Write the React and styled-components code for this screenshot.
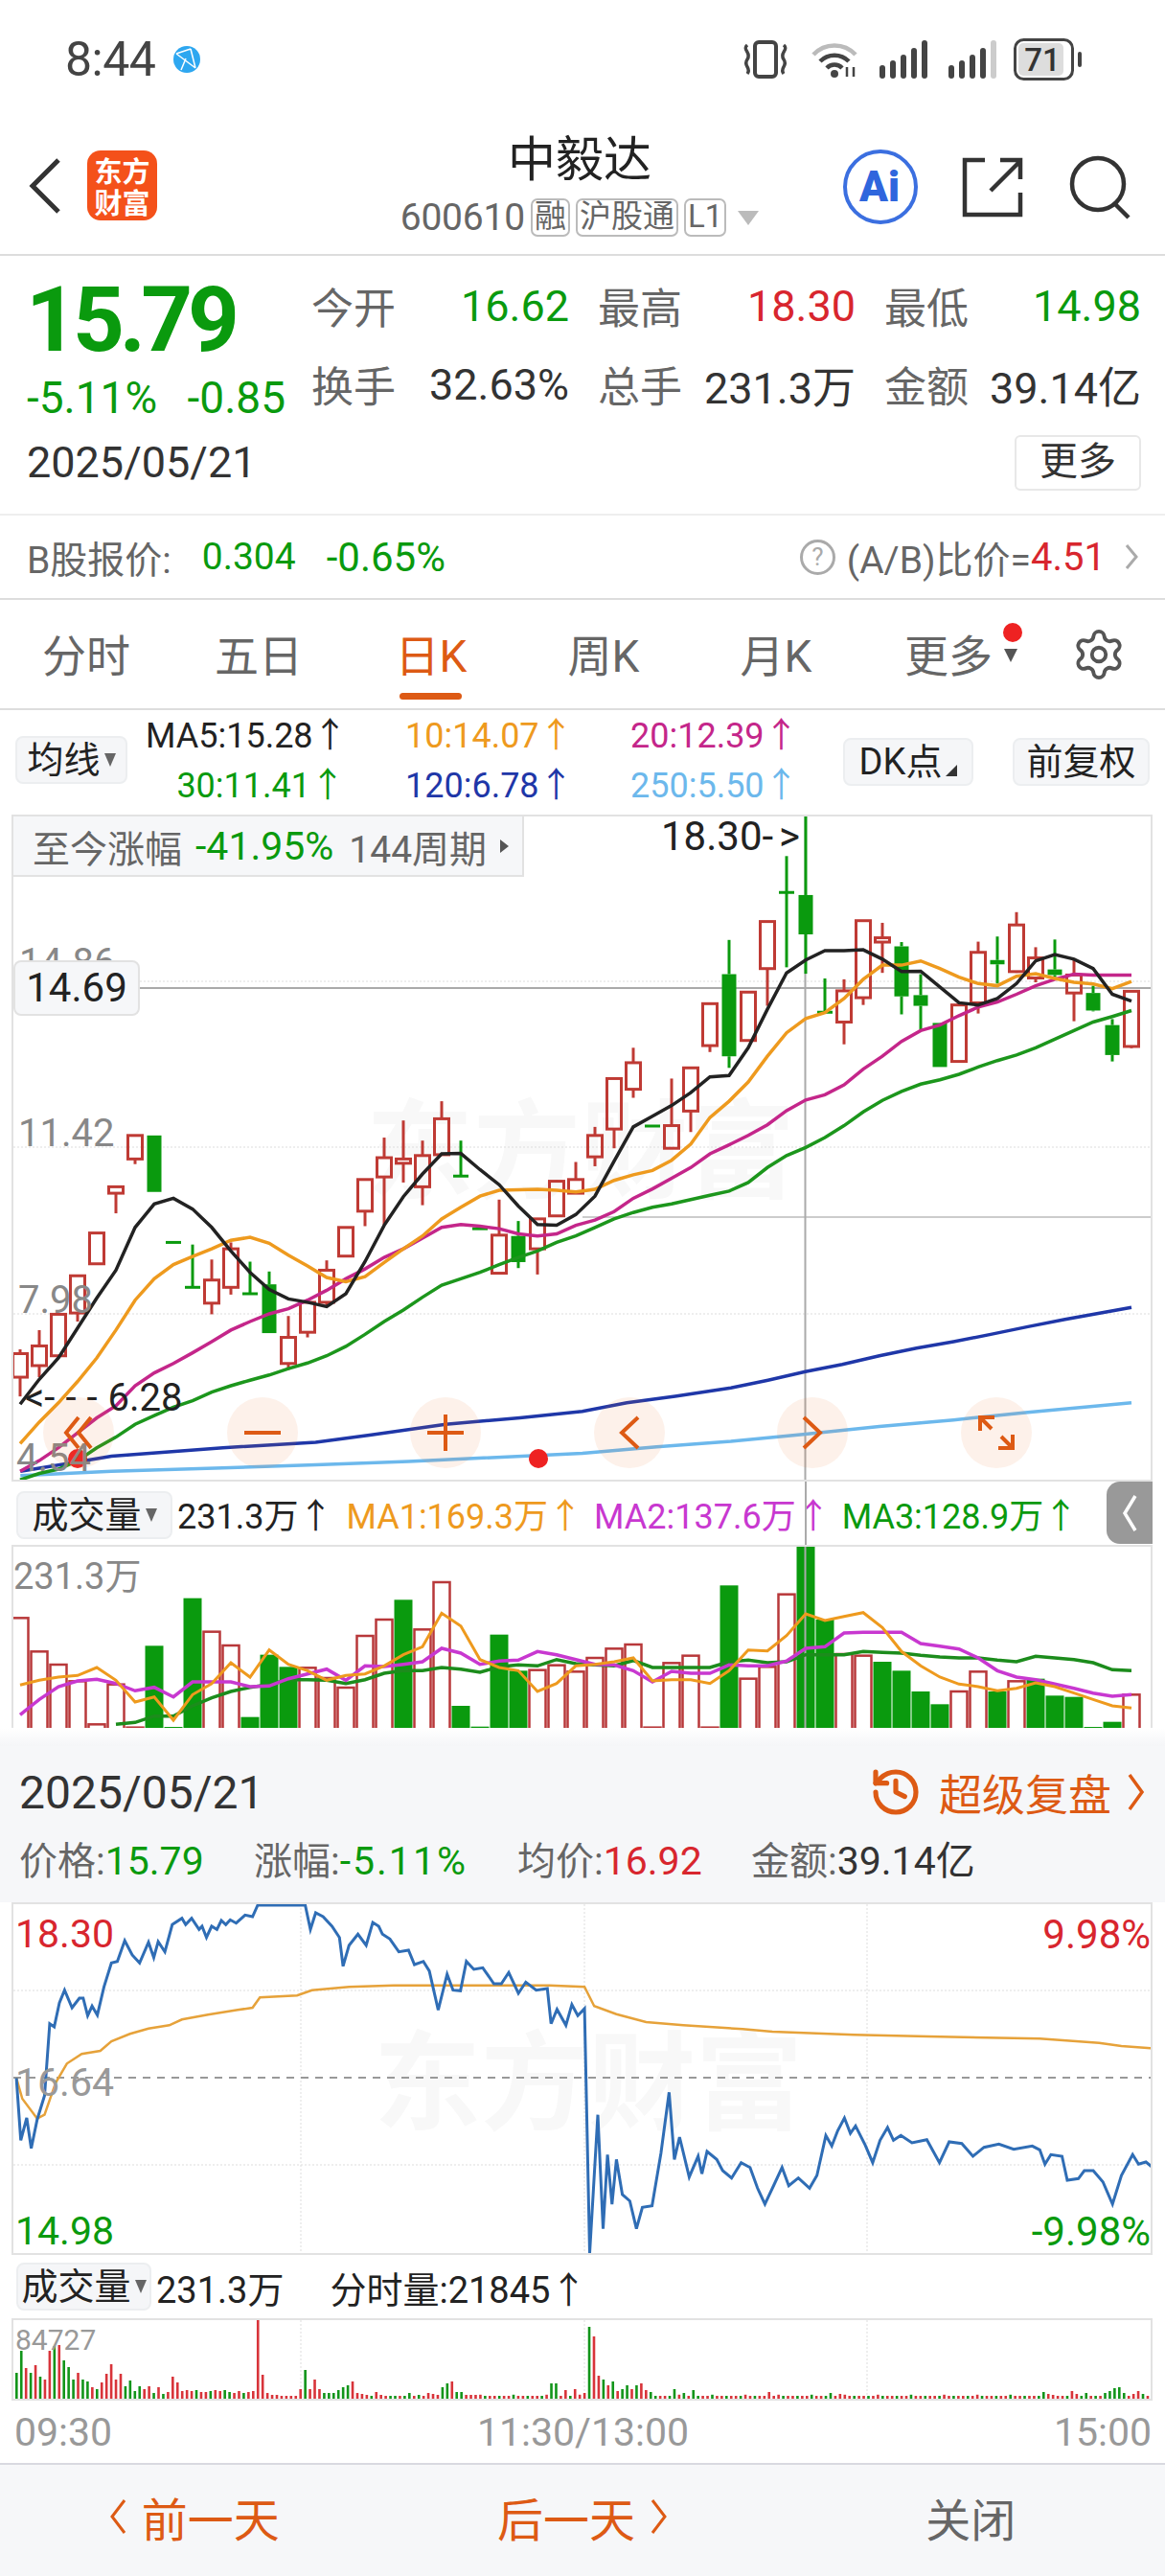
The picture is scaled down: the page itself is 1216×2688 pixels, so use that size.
import styled, { createGlobalStyle } from "styled-components";
import { Settings, History } from "lucide-react";

const GlobalStyle = createGlobalStyle`
    html, body { margin:0; padding:0; background:#fff; }
    body { font-family: Roboto, "Noto Sans CJK SC", sans-serif; color:#333; }
`;

const GREEN = "#0a9a0e";
const RED = "#d8262e";
const ORANGE = "#dd5a14";
const GRAY = "#666";

const Page = styled.div`
    width:1216px;
    height:2688px;
    overflow:hidden;
    background:#fff;
    display:flex;
    flex-direction:column;
`;

/* status bar */
const StatusBar = styled.div`
    height:120px;
    flex:none;
    display:flex;
    align-items:center;
    justify-content:space-between;
    padding:4px 86px 0 68px;
    box-sizing:border-box;
`;
const StatusTime = styled.div`
    display:flex;
    align-items:center;
    gap:19px;
    font-size:50px;
    letter-spacing:-0.5px;
    color:#444;
`;
const StatusIcons = styled.div`
    display:flex;
    align-items:center;
    gap:22px;
`;

/* nav */
const Nav = styled.div`
    height:147px;
    flex:none;
    display:grid;
    grid-template-columns:1fr auto 1fr;
    align-items:start;
    box-sizing:border-box;
    border-bottom:2px solid #ddd;
`;
const NavLeft = styled.div`
    display:flex;
    align-items:center;
    gap:27px;
    padding:37px 0 0 30px;
`;
const Logo = styled.div`
    width:73px;
    height:73px;
    border-radius:14px;
    background:#f4511a;
    color:#fff;
    font-size:29px;
    font-weight:700;
    line-height:33px;
    text-align:center;
    display:flex;
    align-items:center;
    justify-content:center;
    font-family:"Noto Sans CJK SC", sans-serif;
`;
const NavCenter = styled.div`
    display:flex;
    flex-direction:column;
    align-items:center;
    padding:17px 6px 0 0;
`;
const Title = styled.div`
    font-size:50px;
    line-height:60px;
    color:#222;
`;
const SubRow = styled.div`
    display:flex;
    align-items:center;
    gap:6px;
    margin-top:10px;
    font-size:39px;
    line-height:40px;
    color:#666;
    letter-spacing:-0.2px;
`;
const MiniTag = styled.span`
    border:2px solid #bbb;
    border-radius:7px;
    font-size:33px;
    line-height:34px;
    height:36px;
    padding:0 2px;
    letter-spacing:0;
    color:#666;
    display:inline-block;
`;
const Tri = styled.span`
    width:0;
    height:0;
    border-left:11px solid transparent;
    border-right:11px solid transparent;
    border-top:15px solid #bbb;
    margin-left:6px;
`;
const NavRight = styled.div`
    display:flex;
    justify-content:flex-end;
    align-items:center;
    gap:40px;
    padding:35px 34px 0 0;
`;

/* quote */
const Quote = styled.div`
    height:271px;
    flex:none;
    box-sizing:border-box;
    border-bottom:2px solid #eee;
    padding:17px 27px 0 28px;
    display:grid;
    grid-template-columns:297px 1fr;
    grid-template-rows:164px auto;
`;
const PriceBig = styled.div`
    font-size:94px;
    line-height:88px;
    font-weight:700;
    color:${GREEN};
    letter-spacing:-5px;
    margin:6px 0 0 -1px;
`;
const ChangeRow = styled.div`
    display:flex;
    justify-content:space-between;
    margin-top:12px;
    font-size:46px;
    line-height:50px;
    color:${GREEN};
    width:270px;
`;
const Pairs = styled.div`
    display:grid;
    grid-template-columns:269px 269px 268px;
    grid-template-rows:82px 82px;
    column-gap:30px;
    justify-content:end;
`;
const Pair = styled.div`
    display:flex;
    justify-content:space-between;
    align-items:center;
    height:70px;
    font-size:44px;
    color:${GRAY};
`;
const PairValue = styled.span`
    font-size:45px;
    color:${p => p.$color || "#333"};
`;
const DateText = styled.div`
    font-size:45px;
    line-height:54px;
    color:#333;
    align-self:start;
    margin-top:8px;
`;
const MoreBtn = styled.div`
    justify-self:end;
    align-self:start;
    width:132px;
    height:58px;
    box-sizing:border-box;
    border:2px solid #e8e8e8;
    border-radius:6px;
    font-size:40px;
    line-height:52px;
    text-align:center;
    color:#333;
    margin:6px 0 0 auto;
`;
const Blank = styled.div`
    display:flex;
`;

/* B row */
const BRow = styled.div`
    height:88px;
    flex:none;
    box-sizing:border-box;
    border-bottom:2px solid #ddd;
    padding:0 28px;
    display:flex;
    align-items:center;
    font-size:39px;
    color:${GRAY};
`;
const BVal = styled.span`
    color:${p => p.$color};
    margin-left:${p => p.$ml || 0}px;
    font-size:${p => p.$fs || 39}px;
`;
const BRight = styled.div`
    margin-left:auto;
    display:flex;
    align-items:center;
`;
const HelpCircle = styled.span`
    width:37px;
    height:37px;
    box-sizing:border-box;
    border:3px solid #aaa;
    border-radius:50%;
    color:#aaa;
    font-size:26px;
    line-height:31px;
    text-align:center;
    margin-right:12px;
`;

/* tabs */
const Tabs = styled.div`
    height:115px;
    flex:none;
    box-sizing:border-box;
    border-bottom:2px solid #ddd;
    display:grid;
    grid-template-columns:repeat(6,180px) 1fr;
    align-items:center;
`;
const Tab = styled.div`
    position:relative;
    height:100%;
    display:flex;
    align-items:center;
    justify-content:center;
    font-size:46px;
    padding-bottom:4px;
    box-sizing:border-box;
    color:${p => p.$active ? ORANGE : GRAY};
    &::after{
        content:"";
        display:${p => p.$active ? "block" : "none"};
        position:absolute;
        left:57px;
        bottom:9px;
        width:65px;
        height:7px;
        border-radius:4px;
        background:${ORANGE};
    }
`;
const RedDot = styled.span`
    position:absolute;
    left:${p => p.$left}px;
    top:${p => p.$top}px;
    width:20px;
    height:20px;
    border-radius:50%;
    background:#ee2222;
`;
const TabTri = styled.span`
    position:absolute;
    left:148px;
    top:51px;
    border-left:7px solid transparent;
    border-right:7px solid transparent;
    border-top:14px solid #555;
`;
const GearWrap = styled.div`
    display:flex;
    justify-content:center;
    padding-right:2px;
    color:#555;
`;

/* MA row */
const MaRow = styled.div`
    height:109px;
    flex:none;
    display:flex;
    padding:10px 16px 0 16px;
    box-sizing:border-box;
    align-items:flex-start;
`;
const PickBtn = styled.div`
    height:${p => p.$h || 50}px;
    width:${p => p.$w}px;
    margin-top:${p => p.$mt || 0}px;
    margin-left:${p => p.$ml || 0}px;
    box-sizing:border-box;
    background:#f5f6f8;
    border:2px solid #eceef0;
    border-radius:8px;
    font-size:${p => p.$fs || 38}px;
    line-height:${p => (p.$h || 50) - 6}px;
    color:#222;
    display:flex;
    align-items:center;
    justify-content:center;
    gap:4px;
    flex:none;
`;
const SmallTri = styled.span`
    border-left:6px solid transparent;
    border-right:6px solid transparent;
    border-top:14px solid #666;
`;
const CornerTri = styled.span`
    border-left:12px solid transparent;
    border-bottom:12px solid #333;
    align-self:flex-end;
    margin-bottom:8px;
`;
const MaGrid = styled.div`
    display:grid;
    grid-template-columns:208px 235px 235px;
    margin:-9px 0 0 19px;
    flex:none;
    & > :nth-child(3n+2){ margin-left:63px; }
    & > :nth-child(3n+3){ margin-left:63px; }
`;
const MaItem = styled.div`
    font-size:36px;
    line-height:52px;
    white-space:nowrap;
    text-align:${p => p.$right ? "right" : "left"};
    color:${p => p.$color};
`;

/* chart frames */
const Frame = styled.div`
    position:relative;
    flex:none;
    width:1191px;
    height:${p => p.$h}px;
    margin-left:12px;
    box-sizing:border-box;
    border:2px solid #e2e2e2;
    border-bottom-width:${p => p.$noBottom ? 0 : 2}px;
    background:#fff;
    overflow:hidden;
`;
const ChartSvg = styled.svg`
    position:absolute;
    left:0;
    top:0;
    display:block;
`;
const Watermark = styled.div`
    position:absolute;
    left:${p => p.$x}px;
    top:${p => p.$y}px;
    font-size:112px;
    line-height:112px;
    font-weight:700;
    color:#f8f8f8;
    white-space:nowrap;
    font-family:"Noto Sans CJK SC", sans-serif;
`;
const AxisLabel = styled.div`
    position:absolute;
    left:${p => p.$x}px;
    right:${p => p.$r !== undefined ? p.$r + "px" : "auto"};
    ${p => p.$r !== undefined ? "left:auto;" : ""}
    top:${p => p.$y}px;
    font-size:${p => p.$fs || 40}px;
    line-height:1;
    color:${p => p.$color || "#888"};
    white-space:nowrap;
`;
const WideRun = styled.span`
    letter-spacing:${p => p.$ls}px;
`;
const PeriodTag = styled.div`
    position:absolute;
    left:0;
    top:0;
    width:533px;
    height:63px;
    box-sizing:border-box;
    background:#f6f7f9;
    border-right:2px solid #e2e2e2;
    border-bottom:2px solid #e2e2e2;
    display:flex;
    align-items:center;
    padding-left:20px;
    font-size:39px;
    color:${GRAY};
    white-space:nowrap;
`;
const TagGreen = styled.span`
    color:${GREEN};
    margin:0 16px 0 14px;
    font-size:41px;
`;
const TagTri = styled.span`
    border-top:7px solid transparent;
    border-bottom:7px solid transparent;
    border-left:9px solid #555;
    margin-left:14px;
`;
const PriceTag = styled.div`
    position:absolute;
    left:0;
    top:150px;
    width:132px;
    height:58px;
    box-sizing:border-box;
    background:#f6f7f9;
    border:2px solid #e2e2e2;
    border-radius:8px;
    font-size:42px;
    line-height:54px;
    text-align:center;
    color:#222;
`;
const RoundBtn = styled.div`
    position:absolute;
    left:${p => p.$x - 37 - 14}px;
    top:606px;
    width:74px;
    height:74px;
    border-radius:50%;
    background:rgba(240,120,50,0.1);
    display:flex;
    align-items:center;
    justify-content:center;
`;

/* volume header */
const VolHead = styled.div`
    position:relative;
    height:66px;
    flex:none;
    display:flex;
    align-items:center;
    padding-left:17px;
    font-size:36px;
    white-space:nowrap;
`;
const VolItem = styled.span`
    margin-left:${p => p.$ml || 0}px;
    color:${p => p.$color || "#222"};
`;
const CrossLine = styled.div`
    position:absolute;
    left:840px;
    top:0;
    bottom:0;
    width:2px;
    background:#aaa;
`;
const SideTab = styled.div`
    position:absolute;
    left:1155px;
    top:0;
    width:48px;
    height:65px;
    background:#999;
    border-radius:14px 0 0 14px;
    display:flex;
    align-items:center;
    justify-content:center;
`;
const Fade = styled.div`
    height:19px;
    flex:none;
    background:linear-gradient(#fff,#f5f6f8);
`;

/* detail panel */
const Detail = styled.div`
    height:163px;
    flex:none;
    background:#f6f7f9;
    padding:0 21px 0 20px;
    box-sizing:border-box;
`;
const DetailTop = styled.div`
    display:flex;
    align-items:center;
    justify-content:space-between;
    height:82px;
    padding-top:14px;
    box-sizing:border-box;
`;
const DetailDate = styled.div`
    font-size:48px;
    color:#333;
`;
const Replay = styled.div`
    display:flex;
    align-items:center;
    font-size:45px;
    color:${ORANGE};
    gap:17px;
`;
const DetailStats = styled.div`
    display:grid;
    grid-template-columns:245px 275px 244px 1fr;
    margin-top:10px;
    font-size:40px;
    line-height:56px;
    color:${GRAY};
    white-space:nowrap;
`;
const StatVal = styled.span`
    color:${p => p.$color};
    font-size:41px;
    letter-spacing:${p => p.$ls || 0}px;
`;
const MinHead = styled.div`
    height:66px;
    flex:none;
    display:flex;
    align-items:center;
    padding-left:17px;
    font-size:38px;
    color:#333;
    white-space:nowrap;
`;
const TimeAxis = styled.div`
    height:65px;
    flex:none;
    display:flex;
    justify-content:space-between;
    align-items:center;
    padding:0 14px 0 15px;
    font-size:41px;
    color:#999;
`;
const BottomBar = styled.div`
    flex:1;
    display:grid;
    grid-template-columns:repeat(3,1fr);
    background:#f6f7f9;
    border-top:2px solid #d8d9e0;
    align-items:center;
    padding-bottom:8px;
    box-sizing:border-box;
`;
const BottomBtn = styled.div`
    display:flex;
    align-items:center;
    justify-content:center;
    gap:16px;
    font-size:${p => p.$gray ? 47 : 48}px;
    color:${p => p.$gray ? GRAY : ORANGE};
`;

/* main chart data, traced from the picture: one entry per candle, x = 21 + 20*i */
const C = (t, b, h, l, d) => ({ t, b, h: h ?? t, l: l ?? b, d });
const candles = [
    C(1260,1315,1250,1360,1),C(1242,1288,1205,1315,1),C(1168,1265,1168,1270,1),C(1078,1165,1078,1185,1),C(978,1050,978,1050,1),
    C(870,885,870,932,1),C(750,805,750,817,1),C(750,882,750,882,0),C(1000,1001,1000,1001,0),C(1105,1106,1005,1106,0),
    C(1088,1142,1040,1168,1),C(1015,1105,1000,1122,1),C(1120,1121,1045,1121,0),C(1098,1212,1068,1212,0),C(1222,1283,1172,1298,1),
    C(1140,1210,1140,1222,1),C(1065,1140,1042,1150,1),C(965,1032,965,1032,1),C(853,927,853,962,1),C(802,847,755,960,1),
    C(805,815,715,860,1),C(797,870,762,913,1),C(711,795,670,795,1),C(845,846,762,846,0),C(968,969,968,969,0),
    C(983,1072,900,1072,1),C(985,1046,950,1060,0),C(945,1015,945,1075,1),C(857,938,855,938,1),C(853,885,812,885,1),
    C(750,800,730,822,1),C(617,735,617,780,1),C(580,642,545,662,1),C(728,729,728,729,0),C(727,780,617,780,1),
    C(592,693,592,742,1),C(442,540,442,555,1),C(373,565,293,592,0),C(415,528,415,528,1),C(250,360,250,447,1),
    C(182,183,97,357,0),C(188,280,0,372,0),C(462,463,383,463,0),C(412,485,385,537,1),C(248,428,248,445,1),
    C(288,298,253,370,1),C(308,425,298,467,0),C(422,447,373,503,0),C(487,590,487,590,0),C(445,577,445,577,1),
    C(322,440,297,465,1),C(340,350,285,395,0),C(258,367,228,370,1),C(335,382,310,392,1),C(362,375,292,380,0),
    C(375,417,340,483,1),C(417,458,400,460,0),C(492,562,478,577,0),C(413,542,413,546,1),
];
const ma5 = [1378,1320,1270,1200,1130,1065,965,910,897,922,965,1020,1070,1110,1132,1140,1150,1120,1045,960,893,840,793,792,830,865,915,958,960,935,892,810,730,705,680,650,613,610,545,455,370,340,318,318,316,338,367,366,403,440,445,430,395,342,327,338,360,420,436];
const ma10 = [1470,1420,1375,1325,1270,1205,1135,1085,1052,1033,1015,995,988,1002,1030,1055,1082,1092,1080,1047,1015,985,945,918,892,878,877,876,878,882,876,855,842,832,808,770,708,670,625,565,510,477,463,430,385,352,352,342,360,380,395,400,378,372,383,392,396,407,390];
const ma20 = [1535,1510,1480,1445,1410,1382,1335,1305,1283,1258,1232,1205,1185,1167,1155,1135,1112,1085,1062,1035,1015,990,965,958,962,968,980,985,980,960,948,928,897,875,850,825,793,772,750,725,692,667,655,632,595,565,530,505,492,470,450,438,420,400,385,373,375,375,375];
const ma30 = [1555,1540,1530,1510,1480,1455,1425,1405,1385,1370,1350,1335,1322,1310,1295,1282,1265,1243,1215,1185,1158,1128,1100,1085,1070,1052,1035,1020,1000,985,965,945,930,918,910,900,890,880,860,825,797,778,755,727,695,668,647,630,620,607,590,575,562,545,525,505,485,472,458];
const ma120 = [[55,1535],[300,1500],[600,1480],[850,1467],[1000,1450],[1200,1425],[1400,1410],[1568,1395],[1688,1375],[1818,1360],[1968,1340],[2068,1322],[2169,1302],[2268,1285],[2368,1265],[2468,1247],[2568,1232],[2668,1215],[2768,1197],[2868,1180],[3047,1152]];
const ma250 = [[55,1545],[300,1535],[600,1527],[850,1520],[1100,1512],[1568,1493],[1768,1478],[1968,1465],[2169,1448],[2368,1430],[2568,1415],[2768,1397],[3047,1375]];

const my = v => 850 + v / 2.24;
const cx = i => 21 + 20 * i;
const maPts = arr => arr.map((v, i) => `${cx(i)},${my(v).toFixed(1)}`).join(" ");
const tracePts = arr => arr.map(([x, y]) => `${(x / 2.58).toFixed(1)},${my(y).toFixed(1)}`).join(" ");

function MainChart() {
    return (
        <ChartSvg width="1187" height="692" viewBox="14 852 1187 692">
            <line x1="14" x2="1201" y1="1024" y2="1024" stroke="#ddd" strokeDasharray="2 2" />
            <line x1="14" x2="1201" y1="1197" y2="1197" stroke="#ddd" strokeDasharray="2 2" />
            <line x1="14" x2="1201" y1="1371" y2="1371" stroke="#ddd" strokeDasharray="2 2" />
            <line x1="145" x2="1201" y1="1031" y2="1031" stroke="#aaa" strokeWidth="2" />
            <line x1="608" x2="1201" y1="1270" y2="1270" stroke="#ccc" strokeWidth="2" />
            <line x1="840.5" x2="840.5" y1="852" y2="1544" stroke="#aaa" strokeWidth="2" />
            {candles.map((c, i) => {
                const x = cx(i), t = my(c.t), b = my(c.b), h = my(c.h), l = my(c.l);
                const col = c.d ? "#bf3a34" : GREEN;
                return (
                    <g key={i} stroke={col} strokeWidth="3">
                        {h < t && <line x1={x} x2={x} y1={h} y2={t} />}
                        {l > b && <line x1={x} x2={x} y1={b} y2={l} />}
                        {b - t < 2
                            ? <line x1={x - 8} x2={x + 8} y1={t} y2={t} />
                            : c.d
                                ? <rect x={x - 7.5} y={t} width="15" height={b - t} fill="none" />
                                : <rect x={x - 7.5} y={t} width="15" height={b - t} fill={GREEN} strokeWidth="0" />}
                    </g>
                );
            })}
            <polyline points={tracePts(ma250)} fill="none" stroke="#6cb8ec" strokeWidth="3.5" />
            <polyline points={tracePts(ma120)} fill="none" stroke="#1f37a8" strokeWidth="3.5" />
            <polyline points={maPts(ma30)} fill="none" stroke="#1c961c" strokeWidth="3.5" />
            <polyline points={maPts(ma20)} fill="none" stroke="#c4268a" strokeWidth="3.5" />
            <polyline points={maPts(ma10)} fill="none" stroke="#ee9a1e" strokeWidth="3.5" />
            <polyline points={maPts(ma5)} fill="none" stroke="#222" strokeWidth="3.5" />
            <circle cx="81" cy="1522" r="10" fill="#ee2222" />
            <circle cx="562" cy="1522" r="10" fill="#ee2222" />
        </ChartSvg>
    );
}

const volBars = [
    [472,1],[577,1],[618,1],[670,1],[805,1],[680,1],[815,1],[562,0],[816,0],[413,0],[515,1],[558,1],[785,0],[590,0],[628,0],
    [628,1],[660,1],[690,1],[528,1],[477,1],[418,0],[508,1],[360,1],[750,0],[815,0],[527,0],[640,0],[635,1],[620,1],[640,1],
    [597,1],[568,1],[555,1],[815,1],[613,1],[590,1],[815,1],[373,0],[662,1],[625,1],[398,1],[250,0],[480,0],[585,1],[590,1],
    [612,0],[640,0],[705,0],[745,0],[702,1],[640,1],[705,0],[670,1],[665,0],[718,0],[722,0],[816,0],[800,0],[712,1],
];
const volMa1 = [685,670,660,655,630,670,738,722,795,715,680,615,660,575,620,640,670,655,650,625,590,565,460,500,605,630,640,705,680,625,620,612,600,672,668,668,680,640,575,578,530,462,483,470,458,505,580,625,660,682,690,703,695,678,690,710,730,750,757];
const volMa2 = [778,730,690,672,667,680,703,692,722,675,675,675,690,688,665,650,635,670,625,627,620,612,570,585,620,610,607,580,590,605,620,622,640,675,642,648,648,622,625,625,610,570,565,522,520,520,520,555,563,572,600,640,660,668,682,695,710,720,715];
const volMa3 = [818,818,818,818,818,808,802,782,782,750,725,705,692,683,668,668,670,680,668,648,640,640,630,635,645,628,622,625,605,618,622,625,608,630,630,630,630,612,607,615,612,590,590,590,580,583,585,592,597,600,600,607,612,595,600,605,615,637,640];
const vy = v => 1530 + v / 3;
const volPts = (arr, from = 0) => arr.slice(from).map((v, i) => `${cx(i + from)},${vy(v).toFixed(1)}`).join(" ");

function VolChart() {
    return (
        <ChartSvg width="1187" height="189" viewBox="14 1614 1187 189">
            {volBars.map(([top, up], i) => {
                const x = cx(i), y = vy(top), h = 1803 - y;
                return up
                    ? <rect key={i} x={x - 8.5} y={y + 1} width="17" height={h + 4} fill="#fff" stroke="#b8383a" strokeWidth="2.5" />
                    : <rect key={i} x={x - 9.5} y={y} width="19" height={h} fill={GREEN} />;
            })}
            <line x1="840.5" x2="840.5" y1="1614" y2="1803" stroke="#aaa" strokeWidth="2" />
            <polyline points={volPts(volMa3, 5)} fill="none" stroke="#1c8c1c" strokeWidth="3.5" />
            <polyline points={volPts(volMa2)} fill="none" stroke="#c838d0" strokeWidth="3.5" />
            <polyline points={volPts(volMa1)} fill="none" stroke="#ee9a1e" strokeWidth="3" />
        </ChartSvg>
    );
}

const pricePts = [[22,1045],[28,1240],[36,1170],[42,1265],[50,1175],[60,1100],[67,875],[73,885],[80,810],[87,770],[97,825],[107,795],[112,795],[118,850],[124,820],[131,848],[140,760],[150,685],[158,680],[168,615],[178,660],[188,685],[200,620],[207,668],[213,618],[222,650],[232,565],[245,545],[250,565],[258,545],[268,580],[272,570],[278,605],[285,570],[292,580],[298,552],[304,565],[310,550],[318,560],[330,535],[340,540],[347,504],[411,504],[418,580],[425,528],[435,540],[447,570],[457,605],[462,695],[470,630],[482,595],[493,630],[502,558],[510,570],[515,595],[525,610],[537,650],[550,645],[558,690],[570,680],[578,710],[590,832],[602,720],[610,770],[620,772],[628,680],[638,705],[650,700],[665,750],[675,750],[685,715],[698,780],[708,745],[722,770],[737,765],[742,875],[750,830],[762,880],[770,815],[778,850],[787,828],[794,1593],[805,1160],[812,1517],[818,1285],[824,1440],[830,1300],[838,1410],[848,1430],[857,1517],[865,1450],[878,1445],[890,1280],[901,1090],[908,1300],[915,1230],[928,1355],[940,1290],[945,1345],[952,1275],[965,1300],[973,1335],[985,1358],[998,1310],[1010,1325],[1020,1390],[1030,1440],[1042,1380],[1053,1325],[1062,1382],[1075,1358],[1090,1390],[1100,1350],[1112,1225],[1120,1258],[1128,1210],[1137,1170],[1145,1218],[1152,1195],[1165,1255],[1175,1310],[1185,1240],[1195,1200],[1203,1240],[1213,1225],[1228,1248],[1248,1238],[1265,1310],[1278,1245],[1295,1250],[1310,1290],[1325,1262],[1345,1252],[1365,1268],[1390,1258],[1400,1270],[1407,1315],[1415,1285],[1430,1290],[1437,1365],[1452,1360],[1460,1335],[1472,1335],[1485,1370],[1498,1440],[1510,1350],[1525,1285],[1533,1315],[1543,1308],[1552,1325]];
const avgPts = [[22,1045],[30,1110],[50,1172],[60,1160],[75,1060],[90,1000],[110,970],[135,960],[150,930],[175,907],[200,890],[228,880],[245,862],[280,847],[320,832],[340,825],[350,793],[400,787],[420,770],[470,760],[530,755],[600,755],[700,755],[740,755],[787,760],[800,820],[830,845],[870,870],[920,880],[1000,892],[1040,900],[1150,910],[1250,915],[1400,922],[1480,935],[1510,945],[1552,952]];
const dayPts = arr => arr.map(([x, y]) => `${(x / 1.29).toFixed(1)},${(1820 + y / 3).toFixed(1)}`).join(" ");

function DayChart() {
    return (
        <ChartSvg width="1187" height="364" viewBox="14 1987 1187 364">
            <g stroke="#ddd" strokeDasharray="2 2">
                <line x1="14" x2="1201" y1="2077" y2="2077" />
                <line x1="14" x2="1201" y1="2259" y2="2259" />
                <line x1="314" x2="314" y1="1987" y2="2351" />
                <line x1="610" x2="610" y1="1987" y2="2351" />
                <line x1="905" x2="905" y1="1987" y2="2351" />
            </g>
            <line x1="14" x2="1201" y1="2168" y2="2168" stroke="#999" strokeWidth="2" strokeDasharray="8 7" />
            <polyline points={dayPts(avgPts)} fill="none" stroke="#e6a23a" strokeWidth="2.5" />
            <polyline points={dayPts(pricePts)} fill="none" stroke="#2f6db5" strokeWidth="3" />
        </ChartSvg>
    );
}

/* minute volume: a low base, the notable bars by index; positive red, negative green */
const minuteBars = Array.from({ length: 241 }, (_, i) => (i % 3 === 0 ? -3 : 3) * (i % 7 === 0 ? 1.4 : 1));
const minuteMarks = [-27,-50,32,-27,35,-23,20,50,-55,56,-40,-33,-20,27,-20,-18,12,-10,17,26,36,20,26,-13,-19,-8,-13,10,13,-6,12,-5,7,23,17,8,9,8,-9,7,7,-8,9,8,-9,-7,6,8,-6,7,8,84,25,6,4,4,3,3,3,3,10,-30,10,20,10,-6,-6,-6,-9,-12,-14,18,6,5,4,-3,7,4,3,-3,-3,3,-3,-6,3,-4,3,6,5,4,-12,-16,18,-7,-7,4,4,4];
minuteMarks.forEach((v, i) => { minuteBars[i] = v; });
Object.entries({ 113:-16,114:-16,116:9,118:10,120:6,121:-75,122:65,123:24,124:-20,125:14,126:-18,127:8,128:-10,129:-14,130:10,131:-14,132:16,133:9,134:-7,139:-10,141:-6,143:-9,159:7,172:-6,174:5,217:-7,218:5,219:4,223:8,224:5,226:-6,230:-6,231:-8,232:-11,233:-12,234:-6,236:5,237:8,238:-5,240:-22 }).forEach(([i, v]) => { minuteBars[i] = v; });

function MinuteChart() {
    return (
        <ChartSvg width="1187" height="83" viewBox="14 2421 1187 83">
            <g stroke="#ddd" strokeDasharray="2 2">
                <line x1="314" x2="314" y1="2421" y2="2504" />
                <line x1="610" x2="610" y1="2421" y2="2504" />
                <line x1="905" x2="905" y1="2421" y2="2504" />
            </g>
            {minuteBars.map((v, i) => (
                <rect key={i} x={16 + 4.94 * i} y={2503 - Math.abs(v)} width="2.6" height={Math.abs(v)} fill={v > 0 ? "#d8343a" : "#12951a"} />
            ))}
        </ChartSvg>
    );
}

const ORANGE_STROKE = { fill: "none", stroke: ORANGE, strokeWidth: 4 };

function StatusRight() {
    return (
        <StatusIcons>
            <svg width="50" height="40" viewBox="0 0 50 40" fill="none" stroke="#444" strokeWidth="4">
                <rect x="14" y="2" width="22" height="36" rx="4" />
                <path d="M6 5c-6 5 5 8 0 15s5 9 0 15M44 5c6 5-5 8 0 15s-5 9 0 15" strokeWidth="3.5" />
            </svg>
            <svg width="50" height="40" viewBox="0 0 50 40" fill="none" strokeWidth="4.5">
                <path d="M3 15a30 30 0 0 1 44 0" stroke="#bbb" />
                <path d="M10 22a21 21 0 0 1 30 0" stroke="#444" />
                <path d="M17 29a11 11 0 0 1 16 0" stroke="#444" />
                <circle cx="25" cy="35" r="4" fill="#444" stroke="none" />
                <path d="M38 28v10M45 38V28" stroke="#444" strokeWidth="2.5" />
            </svg>
            <svg width="50" height="40" viewBox="0 0 50 40" fill="#444">
                <rect x="0" y="26" width="6" height="14" rx="3" />
                <rect x="11" y="21" width="6" height="19" rx="3" />
                <rect x="22" y="15" width="6" height="25" rx="3" />
                <rect x="33" y="8" width="6" height="32" rx="3" />
                <rect x="44" y="0" width="6" height="40" rx="3" />
            </svg>
            <svg width="50" height="40" viewBox="0 0 50 40" fill="#444">
                <rect x="0" y="26" width="6" height="14" rx="3" />
                <rect x="11" y="21" width="6" height="19" rx="3" />
                <rect x="22" y="15" width="6" height="25" rx="3" />
                <rect x="33" y="8" width="6" height="32" rx="3" />
                <rect x="44" y="0" width="6" height="40" rx="3" fill="#ccc" />
            </svg>
            <svg width="72" height="44" viewBox="0 0 72 44" style={{ marginLeft: -4 }}>
                <rect x="1.5" y="1.5" width="60" height="41" rx="9" fill="none" stroke="#444" strokeWidth="3" />
                <rect x="5" y="5" width="47" height="34" rx="5" fill="#ddd" />
                <rect x="67" y="14" width="4" height="16" rx="2" fill="#444" />
                <text x="30" y="34" fontSize="33" fontWeight="500" fontFamily="Roboto" textAnchor="middle" fill="#333">71</text>
            </svg>
        </StatusIcons>
    );
}

function App() {
    return (
        <Page>
            <GlobalStyle />
            <StatusBar>
                <StatusTime>
                    8:44
                    <svg width="28" height="30" viewBox="0 0 28 30">
                        <circle cx="14" cy="15" r="14" fill="#2ea7f0" />
                        <path d="M3 9l15 -5M18 4l5 20M3 9l20 15M8 26l5 -12" stroke="#fff" strokeWidth="1.5" fill="none" />
                    </svg>
                </StatusTime>
                <StatusRight />
            </StatusBar>

            <Nav>
                <NavLeft>
                    <svg width="34" height="60" viewBox="0 0 34 60" fill="none" stroke="#333" strokeWidth="5">
                        <path d="M31 3L4 30l27 27" />
                    </svg>
                    <Logo>东方<br />财富</Logo>
                </NavLeft>
                <NavCenter>
                    <Title>中毅达</Title>
                    <SubRow>
                        600610
                        <MiniTag>融</MiniTag>
                        <MiniTag>沪股通</MiniTag>
                        <MiniTag>L1</MiniTag>
                        <Tri />
                    </SubRow>
                </NavCenter>
                <NavRight>
                    <svg width="80" height="80" viewBox="0 0 80 80">
                        <circle cx="40" cy="40" r="37" fill="none" stroke="#3b6fe0" strokeWidth="4" />
                        <text x="39" y="55" fontSize="44" fontWeight="900" fontFamily="Roboto" textAnchor="middle" fill="#2f66dd">Ai</text>
                    </svg>
                    <svg width="64" height="64" viewBox="0 0 64 64" fill="none" stroke="#333" strokeWidth="4.5" style={{ marginLeft: 5 }}>
                        <path d="M24 4H3v57h58V38" />
                        <path d="M30 36L60 6M40 4h21v20" />
                    </svg>
                    <svg width="66" height="68" viewBox="0 0 66 68" fill="none" stroke="#333" strokeWidth="4.5" style={{ marginLeft: 8 }}>
                        <circle cx="30" cy="31" r="27" />
                        <path d="M48 52l14 14" />
                    </svg>
                </NavRight>
            </Nav>

            <Quote>
                <div>
                    <PriceBig>15.79</PriceBig>
                    <ChangeRow><span>-5.11%</span><span>-0.85</span></ChangeRow>
                </div>
                <Pairs>
                    <Pair>今开<PairValue $color={GREEN}>16.62</PairValue></Pair>
                    <Pair>最高<PairValue $color={RED}>18.30</PairValue></Pair>
                    <Pair>最低<PairValue $color={GREEN}>14.98</PairValue></Pair>
                    <Pair>换手<PairValue>32.63%</PairValue></Pair>
                    <Pair>总手<PairValue>231.3万</PairValue></Pair>
                    <Pair>金额<PairValue>39.14亿</PairValue></Pair>
                </Pairs>
                <DateText>2025/05/21</DateText>
                <Blank><MoreBtn>更多</MoreBtn></Blank>
            </Quote>

            <BRow>
                B股报价:
                <BVal $color={GREEN} $ml={32}>0.304</BVal>
                <BVal $color={GREEN} $ml={32} $fs={42}>-0.65%</BVal>
                <BRight>
                    <HelpCircle>?</HelpCircle>
                    (A/B)比价=<BVal $color={RED} $fs={40}>4.51</BVal>
                    <svg width="14" height="28" viewBox="0 0 14 28" fill="none" stroke="#aaa" strokeWidth="3" style={{ marginLeft: 20 }}>
                        <path d="M2 2l10 12L2 26" />
                    </svg>
                </BRight>
            </BRow>

            <Tabs>
                <Tab>分时</Tab>
                <Tab>五日</Tab>
                <Tab $active>日K</Tab>
                <Tab>周K</Tab>
                <Tab>月K</Tab>
                <Tab>更多<RedDot $left={147} $top={24} /><TabTri /></Tab>
                <GearWrap><Settings size={58} strokeWidth={1.6} /></GearWrap>
            </Tabs>

            <MaRow>
                <PickBtn $w={117} $mt={17}>均线<SmallTri /></PickBtn>
                <MaGrid>
                    <MaItem $right $color="#222">MA5:15.28↑</MaItem>
                    <MaItem $color="#ee9a1e">10:14.07↑</MaItem>
                    <MaItem $color="#c4268a">20:12.39↑</MaItem>
                    <MaItem $right $color={GREEN}>30:11.41↑</MaItem>
                    <MaItem $color="#1f37a8">120:6.78↑</MaItem>
                    <MaItem $color="#6cb8ec">250:5.50↑</MaItem>
                </MaGrid>
                <PickBtn $w={136} $mt={19} $ml={50}>DK点<CornerTri /></PickBtn>
                <PickBtn $w={143} $mt={19} $ml={41}>前复权</PickBtn>
            </MaRow>

            <Frame $h={696}>
                <Watermark $x={368} $y={285}>东方财富</Watermark>
                <MainChart />
                <AxisLabel $x={6} $y={133}>14.86</AxisLabel>
                <AxisLabel $x={5} $y={311}>11.42</AxisLabel>
                <AxisLabel $x={5} $y={485}>7.98</AxisLabel>
                <AxisLabel $x={3} $y={650}>4.54</AxisLabel>
                <AxisLabel $x={676} $y={0} $fs={42} $color="#222">18.30<WideRun $ls={6}>-&gt;</WideRun></AxisLabel>
                <AxisLabel $x={12} $y={587} $fs={40} $color="#222">&lt;<WideRun $ls={11}>---</WideRun>6.28</AxisLabel>
                <PeriodTag>至今涨幅<TagGreen>-41.95%</TagGreen>144周期<TagTri /></PeriodTag>
                <PriceTag>14.69</PriceTag>
                <RoundBtn $x={82}>
                    <svg width="32" height="40" viewBox="0 0 32 40" {...ORANGE_STROKE}><path d="M16 4L3 20l13 16M29 4L16 20l13 16" /></svg>
                </RoundBtn>
                <RoundBtn $x={274}>
                    <svg width="38" height="6" viewBox="0 0 38 6" {...ORANGE_STROKE}><path d="M0 3h38" /></svg>
                </RoundBtn>
                <RoundBtn $x={465}>
                    <svg width="38" height="38" viewBox="0 0 38 38" {...ORANGE_STROKE}><path d="M0 19h38M19 0v38" /></svg>
                </RoundBtn>
                <RoundBtn $x={657}>
                    <svg width="22" height="36" viewBox="0 0 22 36" {...ORANGE_STROKE}><path d="M20 2L3 18l17 16" /></svg>
                </RoundBtn>
                <RoundBtn $x={848}>
                    <svg width="22" height="36" viewBox="0 0 22 36" {...ORANGE_STROKE}><path d="M2 2l17 16L2 34" /></svg>
                </RoundBtn>
                <RoundBtn $x={1040}>
                    <svg width="40" height="40" viewBox="0 0 40 40" {...ORANGE_STROKE}><path d="M3 18V4h15M3 4l12 12M37 22v14H22M37 36L25 24" /></svg>
                </RoundBtn>
            </Frame>

            <VolHead>
                <CrossLine />
                <PickBtn $w={163} $mt={3}>成交量<SmallTri /></PickBtn>
                <VolItem $ml={5}>231.3万↑</VolItem>
                <VolItem $ml={14} $color="#ee9a1e">MA1:169.3万↑</VolItem>
                <VolItem $ml={12} $color="#c838d0">MA2:137.6万↑</VolItem>
                <VolItem $ml={12} $color={GREEN}>MA3:128.9万↑</VolItem>
                <SideTab>
                    <svg width="16" height="40" viewBox="0 0 16 40" fill="none" stroke="#fff" strokeWidth="3.5"><path d="M14 2L3 20l11 18" /></svg>
                </SideTab>
            </VolHead>

            <Frame $h={191} $noBottom>
                <VolChart />
                <AxisLabel $x={0} $y={12} $fs={38}>231.3万</AxisLabel>
            </Frame>
            <Fade />

            <Detail>
                <DetailTop>
                    <DetailDate>2025/05/21</DetailDate>
                    <Replay>
                        <History size={56} strokeWidth={2.2} />
                        超级复盘
                        <svg width="18" height="40" viewBox="0 0 18 40" fill="none" stroke={ORANGE} strokeWidth="3.5"><path d="M2 2l13 18L2 38" /></svg>
                    </Replay>
                </DetailTop>
                <DetailStats>
                    <span>价格:<StatVal $color={GREEN}>15.79</StatVal></span>
                    <span>涨幅:<StatVal $color={GREEN} $ls={2}>-5.11%</StatVal></span>
                    <span>均价:<StatVal $color={RED}>16.92</StatVal></span>
                    <span>金额:<StatVal $color="#333">39.14亿</StatVal></span>
                </DetailStats>
            </Detail>

            <Frame $h={368}>
                <Watermark $x={376} $y={122}>东方财富</Watermark>
                <DayChart />
                <AxisLabel $x={2} $y={11} $fs={41} $color={RED}>18.30</AxisLabel>
                <AxisLabel $r={0} $y={11} $fs={42} $color={RED}>9.98%</AxisLabel>
                <AxisLabel $x={2} $y={166} $fs={41} $color="#999">16.64</AxisLabel>
                <AxisLabel $x={2} $y={321} $fs={41} $color={GREEN}>14.98</AxisLabel>
                <AxisLabel $r={0} $y={321} $fs={42} $color={GREEN}>-9.98%</AxisLabel>
            </Frame>

            <MinHead>
                <PickBtn $w={141}>成交量<SmallTri /></PickBtn>
                <VolItem $ml={5}>231.3万</VolItem>
                <VolItem $ml={48}>分时量:21845↑</VolItem>
            </MinHead>

            <Frame $h={86}>
                <MinuteChart />
                <AxisLabel $x={2} $y={6} $fs={30} $color="#999">84727</AxisLabel>
            </Frame>

            <TimeAxis>
                <span>09:30</span>
                <span>11:30/13:00</span>
                <span>15:00</span>
            </TimeAxis>

            <BottomBar>
                <BottomBtn>
                    <svg width="18" height="38" viewBox="0 0 18 38" fill="none" stroke={ORANGE} strokeWidth="3"><path d="M16 2L3 19l13 17" /></svg>
                    前一天
                </BottomBtn>
                <BottomBtn>
                    后一天
                    <svg width="18" height="38" viewBox="0 0 18 38" fill="none" stroke={ORANGE} strokeWidth="3"><path d="M2 2l13 17L2 36" /></svg>
                </BottomBtn>
                <BottomBtn $gray>关闭</BottomBtn>
            </BottomBar>
        </Page>
    );
}

export default App;
